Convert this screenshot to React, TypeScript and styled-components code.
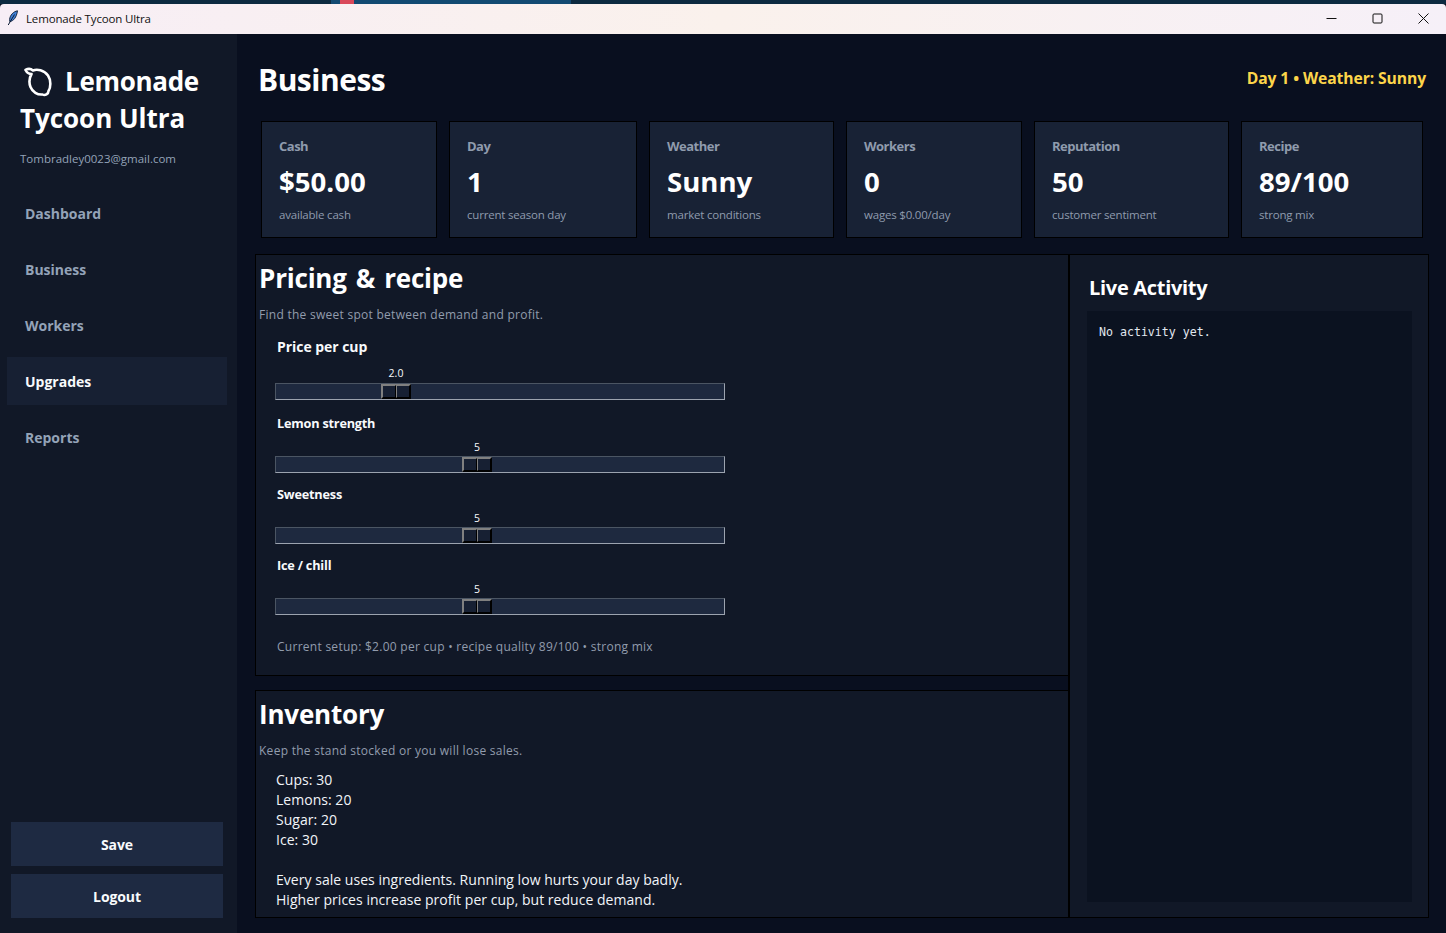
import React from 'react'
import styled, { createGlobalStyle } from 'styled-components'

const GlobalStyle = createGlobalStyle`
  html, body {
    margin: 0;
    padding: 0;
    height: 100%;
    overflow: hidden;
    background: #0b1120;
  }
  #root {
    height: 100%;
  }
`

const Window = styled.div`
  width: 1446px;
  height: 933px;
  display: flex;
  flex-direction: column;
  overflow: hidden;
  font-family: "Open Sans", "Noto Sans", sans-serif;
  background: #090f1f;
`

const BehindStrip = styled.div`
  height: 4px;
  flex: none;
  display: grid;
  grid-template-columns: 331px 9px 14px 217px 1fr;
  background: #0c2a40;
`

const StripBlue = styled.div<{ $red?: boolean }>`
  background: ${(p) => (p.$red ? '#d9485a' : '#124a72')};
`

const TitleBar = styled.div`
  height: 30px;
  flex: none;
  box-sizing: border-box;
  padding: 0 0 2px 7px;
  display: flex;
  align-items: center;
  background: linear-gradient(90deg, #f7eef6, #faf1ec 50%, #f6f0f8);
  border-radius: 4px 4px 0 0;
  color: #111;
  font-size: 11.5px;
  letter-spacing: -0.15px;
`

const TitleText = styled.span`
  margin-left: 7px;
  flex: 1;
`

const WinButton = styled.div`
  width: 46px;
  display: flex;
  align-items: center;
  justify-content: center;
`

const Body = styled.div`
  flex: 1;
  display: flex;
  min-height: 0;
`

const Sidebar = styled.aside`
  width: 237px;
  flex: none;
  background: #111827;
  display: flex;
  flex-direction: column;
  padding: 29px 0 15px;
  box-sizing: border-box;
`

const Brand = styled.div`
  color: #fff;
  font-size: 26px;
  font-weight: 700;
  line-height: 37px;
  padding-left: 20px;
  letter-spacing: -0.05px;
`

const BrandIcon = styled.svg`
  width: 30px;
  height: 30px;
  vertical-align: -6px;
  margin: 0 11px 0 4px;
`

const BrandFirstWord = styled.span`
  letter-spacing: -0.3px;
`

const Email = styled.div`
  color: #94a3b8;
  font-size: 11.5px;
  padding-left: 20px;
  margin-top: 14px;
  line-height: 16px;
`

const Nav = styled.nav`
  margin-top: 22px;
  display: flex;
  flex-direction: column;
  gap: 8px;
  padding: 0 10px 0 7px;
`

const NavItem = styled.div<{ $active?: boolean }>`
  height: 48px;
  display: flex;
  align-items: center;
  padding-left: 18px;
  font-size: 14px;
  font-weight: 700;
  color: ${(p) => (p.$active ? '#f8fafc' : '#94a3b8')};
  background: ${(p) => (p.$active ? '#172033' : 'transparent')};
`

const SideFoot = styled.div`
  margin-top: auto;
  display: flex;
  flex-direction: column;
  gap: 8px;
  padding: 0 14px 0 11px;
`

const SideButton = styled.div`
  height: 44px;
  display: flex;
  align-items: center;
  justify-content: center;
  background: #1e2a42;
  color: #f8fafc;
  font-size: 14px;
  font-weight: 700;
  letter-spacing: -0.1px;
`

const Main = styled.main`
  flex: 1;
  min-width: 0;
  padding: 0 17px 15px 18px;
  display: flex;
  flex-direction: column;
`

const Header = styled.header`
  height: 87px;
  flex: none;
  display: flex;
  align-items: center;
  justify-content: space-between;
  padding: 4px 3px 0 4px;
  box-sizing: border-box;
`

const PageTitle = styled.h1`
  margin: 0 0 0 -1px;
  color: #fff;
  font-size: 30px;
  font-weight: 700;
  letter-spacing: -0.5px;
`

const DayInfo = styled.div`
  color: #fdd54a;
  font-size: 15.7px;
  font-weight: 700;
  letter-spacing: -0.1px;
  margin-top: -4px;
`

const Cards = styled.div`
  display: grid;
  grid-template-columns: 176px 188px 185px 176px 195px 182px;
  gap: 12px;
  padding: 0 6px;
  height: 117px;
  flex: none;
`

const Card = styled.div`
  background: #182235;
  border: 1px solid #000;
  box-sizing: border-box;
  padding: 15px 17px 0;
`

const CardLabel = styled.div`
  color: #8f9bad;
  font-size: 13px;
  font-weight: 700;
  line-height: 18px;
  letter-spacing: -0.5px;
`

const CardValue = styled.div`
  color: #fff;
  font-size: 27.6px;
  font-weight: 700;
  line-height: 36px;
  margin-top: 8px;
`

const CardNote = styled.div`
  color: #8f9bad;
  font-size: 11.5px;
  line-height: 16px;
  margin-top: 8px;
  letter-spacing: -0.2px;
`

const Panels = styled.div`
  flex: 1;
  min-height: 0;
  margin-top: 16px;
  display: grid;
  grid-template-columns: 814px 360px;
`

const LeftColumn = styled.div`
  display: flex;
  flex-direction: column;
  gap: 14px;
  min-height: 0;
`

const Panel = styled.section<{ $height: number }>`
  height: ${(p) => p.$height}px;
  background: #111827;
  border: 1px solid #000;
  box-sizing: border-box;
  padding: 4px 3px 0;
  overflow: hidden;
`

const SectionTitle = styled.h2`
  margin: 0;
  color: #fff;
  font-size: 26px;
  font-weight: 700;
  line-height: 38px;
  letter-spacing: -0.2px;
  word-spacing: 2.5px;
`

const SectionSub = styled.p`
  margin: 9px 0 0;
  color: #929cad;
  font-size: 12px;
  line-height: 17px;
  letter-spacing: 0.27px;
`

const Controls = styled.div`
  padding: 0 16px;
`

const SliderLabel = styled.div<{ $big?: boolean }>`
  color: #f8fafc;
  font-size: ${(p) => (p.$big ? 14 : 12.7)}px;
  font-weight: 700;
  line-height: 18px;
  padding-left: 2px;
  letter-spacing: ${(p) => (p.$big ? -0.05 : -0.2)}px;
`

const SliderBlock = styled.div<{ $top: number }>`
  margin-top: ${(p) => p.$top}px;
`

const SliderValue = styled.div<{ $big?: boolean }>`
  position: relative;
  height: 14px;
  margin-top: ${(p) => (p.$big ? 10 : 8)}px;
  width: 450px;
  color: #f8fafc;
  font-size: 10.5px;
  line-height: 14px;
`

const SliderValueText = styled.span`
  position: absolute;
  transform: translateX(-50%);
`

const Track = styled.div<{ $big?: boolean }>`
  position: relative;
  width: 450px;
  height: 17px;
  margin-top: ${(p) => (p.$big ? 3 : 2)}px;
  box-sizing: border-box;
  background: #1e293f;
  border-style: solid;
  border-width: 1px;
  border-color: #4b5563 #9ca3af #9ca3af #4b5563;
`

const Thumb = styled.div`
  position: absolute;
  top: 0;
  width: 30px;
  height: 15px;
  box-sizing: border-box;
  display: grid;
  grid-template-columns: 1fr 1fr;
  border-style: solid;
  border-width: 1px;
  border-color: #808080 #000 #000 #808080;
`

const ThumbHalf = styled.div`
  background: #172033;
  border-style: solid;
  border-width: 1px;
  border-color: #808080 #000 #000 #808080;
`

const SetupLine = styled.div`
  margin: 23px 0 0 2px;
  color: #929cad;
  font-size: 12px;
  line-height: 17px;
  letter-spacing: 0.27px;
`

const InventoryText = styled.div`
  margin: 11px 0 0 17px;
  color: #f1f5f9;
  font-size: 14px;
  line-height: 20px;
  white-space: pre-line;
  letter-spacing: 0.03px;
`

const ActivityPanel = styled.section`
  background: #111827;
  border: 1px solid #000;
  border-left-width: 2px;
  box-sizing: border-box;
  margin-left: -1px;
  height: 664px;
  padding: 16px 16px 15px 17px;
  display: flex;
  flex-direction: column;
`

const ActivityTitle = styled.h3`
  margin: 0 0 0 2px;
  color: #fff;
  font-size: 20px;
  font-weight: 700;
  line-height: 34px;
  letter-spacing: -0.3px;
`

const ActivityLog = styled.div`
  flex: 1;
  margin-top: 6px;
  background: #0b1220;
  padding: 13px 12px;
  color: #e2e8f0;
  font-family: "DejaVu Sans Mono", "Liberation Mono", monospace;
  font-size: 11.6px;
  line-height: 16px;
`

type SliderProps = {
  label: string
  value: string
  center: number
  big?: boolean
  top: number
}

function Slider({ label, value, center, big, top }: SliderProps) {
  return (
    <SliderBlock $top={top}>
      <SliderLabel $big={big}>{label}</SliderLabel>
      <SliderValue $big={big}>
        <SliderValueText style={{ left: center }}>{value}</SliderValueText>
      </SliderValue>
      <Track $big={big}>
        <Thumb style={{ left: center - 16 }}>
          <ThumbHalf />
          <ThumbHalf />
        </Thumb>
      </Track>
    </SliderBlock>
  )
}

const stats = [
  { label: 'Cash', value: '$50.00', note: 'available cash' },
  { label: 'Day', value: '1', note: 'current season day' },
  { label: 'Weather', value: 'Sunny', note: 'market conditions' },
  { label: 'Workers', value: '0', note: 'wages $0.00/day' },
  { label: 'Reputation', value: '50', note: 'customer sentiment' },
  { label: 'Recipe', value: '89/100', note: 'strong mix' },
]

const navItems = ['Dashboard', 'Business', 'Workers', 'Upgrades', 'Reports']

export default function App() {
  return (
    <Window>
      <GlobalStyle />
      <BehindStrip>
        <span />
        <StripBlue />
        <StripBlue $red />
        <StripBlue />
      </BehindStrip>
      <TitleBar>
        <svg width="12" height="16" viewBox="0 0 12 16">
          <path d="M10.5 0.8C6.5 1.5 3 5 2.6 9.5L2.8 11.6C6.5 11 9.5 7.5 10.5 0.8Z" fill="#3f7fd6" stroke="#0b1b33" strokeWidth="0.9" />
          <path d="M7.5 4.5L1.2 15" stroke="#0b1b33" strokeWidth="1" fill="none" />
        </svg>
        <TitleText>Lemonade Tycoon Ultra</TitleText>
        <WinButton>
          <svg width="11" height="11" viewBox="0 0 11 11"><path d="M0.5 5.5H10.5" stroke="#111" fill="none" /></svg>
        </WinButton>
        <WinButton>
          <svg width="11" height="11" viewBox="0 0 11 11"><rect x="1" y="1" width="9" height="9" rx="1" stroke="#111" fill="none" /></svg>
        </WinButton>
        <WinButton>
          <svg width="11" height="11" viewBox="0 0 11 11"><path d="M0.5 0.5L10.5 10.5M10.5 0.5L0.5 10.5" stroke="#111" fill="none" /></svg>
        </WinButton>
      </TitleBar>
      <Body>
        <Sidebar>
          <Brand>
            <BrandIcon viewBox="0 0 30 30">
              <path
                d="M1.5 3C4 1.6 7 1.8 9 3.5C13 1.8 20 3 24 8.5C27 13 27 20 24.5 24C24.5 27 21 29 18.5 27.5C13.5 28 8.5 25 6.5 20C5 16 5.5 10.5 7.5 7C5 7 2.8 5.5 1.5 3Z"
                fill="none"
                stroke="#fff"
                strokeWidth="2.6"
                strokeLinejoin="round"
              />
            </BrandIcon>
            <BrandFirstWord>Lemonade</BrandFirstWord> Tycoon Ultra
          </Brand>
          <Email>Tombradley0023@gmail.com</Email>
          <Nav>
            {navItems.map((item) => (
              <NavItem key={item} $active={item === 'Upgrades'}>{item}</NavItem>
            ))}
          </Nav>
          <SideFoot>
            <SideButton>Save</SideButton>
            <SideButton>Logout</SideButton>
          </SideFoot>
        </Sidebar>
        <Main>
          <Header>
            <PageTitle>Business</PageTitle>
            <DayInfo>Day 1 • Weather: Sunny</DayInfo>
          </Header>
          <Cards>
            {stats.map((s) => (
              <Card key={s.label}>
                <CardLabel>{s.label}</CardLabel>
                <CardValue>{s.value}</CardValue>
                <CardNote>{s.note}</CardNote>
              </Card>
            ))}
          </Cards>
          <Panels>
            <LeftColumn>
              <Panel $height={422}>
                <SectionTitle>Pricing &amp; recipe</SectionTitle>
                <SectionSub>Find the sweet spot between demand and profit.</SectionSub>
                <Controls>
                  <Slider label="Price per cup" value="2.0" center={121} big top={15} />
                  <Slider label="Lemon strength" value="5" center={202} top={14} />
                  <Slider label="Sweetness" value="5" center={202} top={12} />
                  <Slider label="Ice / chill" value="5" center={202} top={12} />
                  <SetupLine>Current setup: $2.00 per cup • recipe quality 89/100 • strong mix</SetupLine>
                </Controls>
              </Panel>
              <Panel $height={228}>
                <SectionTitle>Inventory</SectionTitle>
                <SectionSub>Keep the stand stocked or you will lose sales.</SectionSub>
                <InventoryText>
                  {'Cups: 30\nLemons: 20\nSugar: 20\nIce: 30\n\nEvery sale uses ingredients. Running low hurts your day badly.\nHigher prices increase profit per cup, but reduce demand.'}
                </InventoryText>
              </Panel>
            </LeftColumn>
            <ActivityPanel>
              <ActivityTitle>Live Activity</ActivityTitle>
              <ActivityLog>No activity yet.</ActivityLog>
            </ActivityPanel>
          </Panels>
        </Main>
      </Body>
    </Window>
  )
}
